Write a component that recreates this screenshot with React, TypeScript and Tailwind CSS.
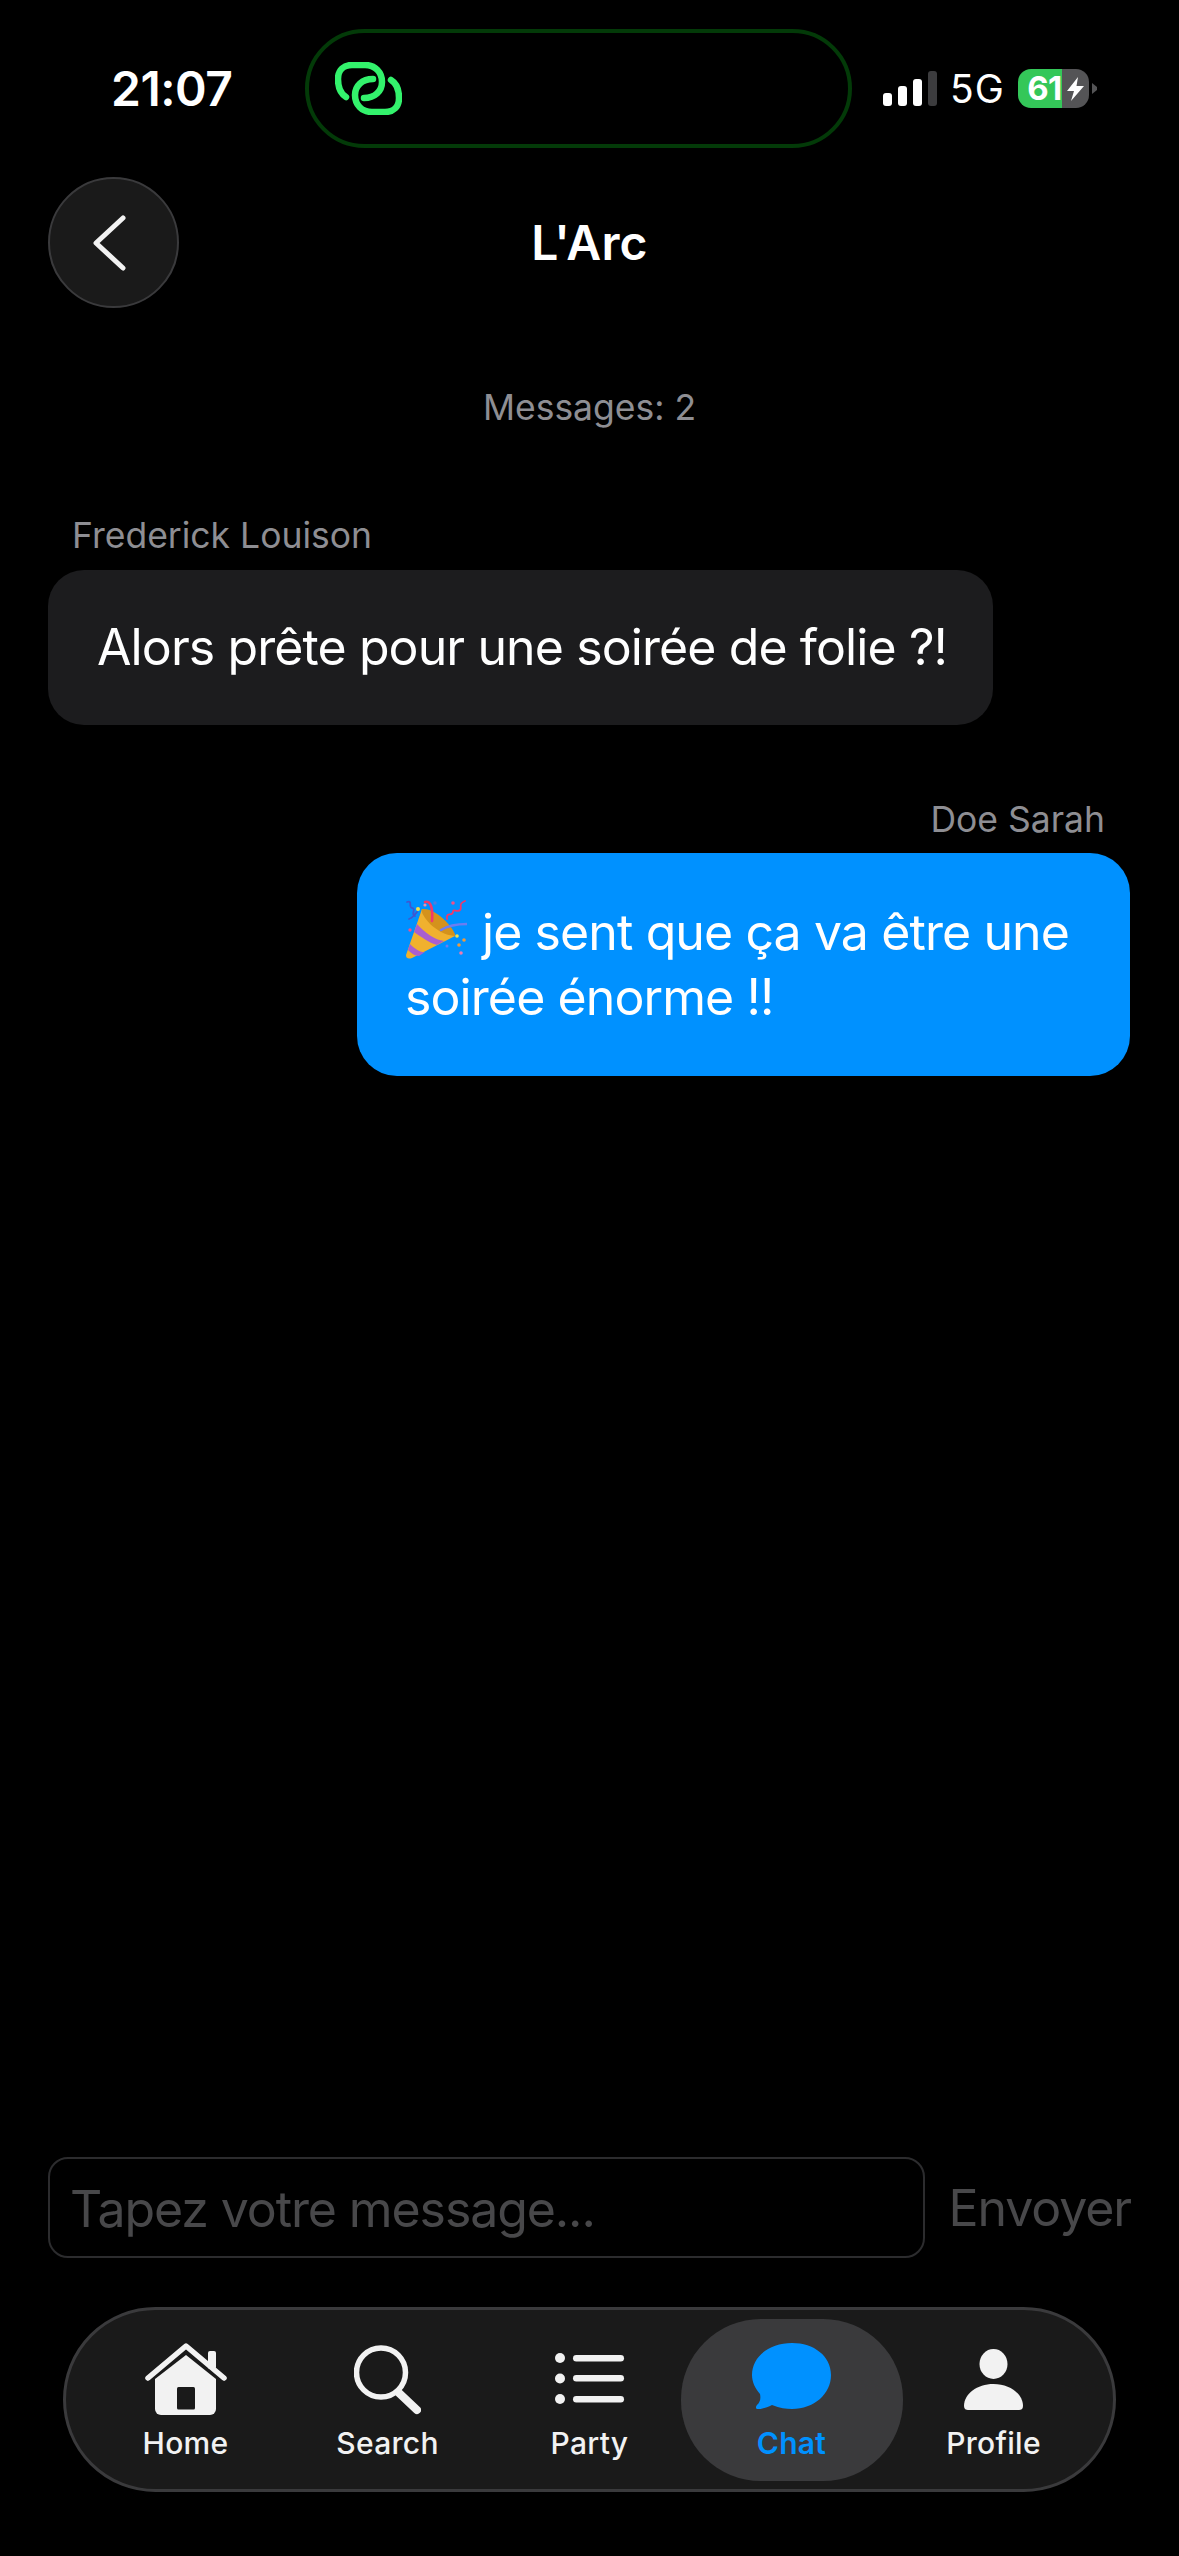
const NAV_LABEL = "mt-[10px] text-[30px] leading-[36px] tracking-[0.3px]";

function LinkLogo() {
  return (
    <svg width="67" height="53" viewBox="0 0 67 53" fill="none" stroke="#33f26c" strokeWidth="6.5" strokeLinecap="round">
      <path d="M11 35 C6 32 3 26 3 17 C3 8 9 3 17 3 H30 C40 3 47 10 47 20 C47 29 40 36 29 36" />
      <path d="M56 18 C61 21 64 27 64 36 C64 45 58 50 50 50 H37 C27 50 20 43 20 33 C20 24 27 17 38 17" />
    </svg>
  );
}

function SignalBars() {
  return (
    <div className="flex h-[35px] w-[54px] items-end justify-between">
      <div className="h-[13px] w-[9px] rounded-[3px] bg-white" />
      <div className="h-[20px] w-[9px] rounded-[3px] bg-white" />
      <div className="h-[27px] w-[9px] rounded-[3px] bg-white" />
      <div className="h-[35px] w-[9px] rounded-[3px] bg-[#3c3c3e]" />
    </div>
  );
}

function Battery() {
  return (
    <div className="flex items-center">
      <div className="flex h-[39px] w-[71px] overflow-hidden rounded-[13px]">
        <div className="flex w-[44px] items-center justify-end bg-[#34c759] text-[33px] leading-none font-bold tracking-[-0.5px] text-white">
          61
        </div>
        <div className="flex w-[27px] items-center justify-center bg-[#545456]">
          <svg width="17" height="24" viewBox="0 0 17 24" fill="#fff">
            <path d="M11 0 L0 14 H7 L4 24 L17 9 H9.5 Z" />
          </svg>
        </div>
      </div>
      <svg className="ml-[3px]" width="5" height="11" viewBox="0 0 5 11" fill="#545456">
        <path d="M0 0 L5 4 V7 L0 11 Z" />
      </svg>
    </div>
  );
}

function PartyPopper() {
  return (
    <svg className="mr-[15px] inline-block align-[-10px]" width="62" height="61" viewBox="0 0 62 61" fill="none">
      <path d="M17 10 L1 56 C1 60 4 60 7 59 L50 37 C46 26 30 12 17 10 Z" fill="#f0b12e" />
      <path d="M17 10 C14 14 30 36 50 37 C52 33 32 8 17 10 Z" fill="#d4921c" />
      <path d="M12 25 C20 34 30 41 39 42 L32 46 C24 44 15 37 9 33 Z" fill="#a95fd0" />
      <path d="M5 45 C10 50 16 54 20 53 L14 57 C10 57 6 54 3 51 Z" fill="#a95fd0" />
      <path d="M2 3 C8 1 3 8 7 9 C12 10 5 15 10 17 M4 20 C9 18 9 16 12 13" stroke="#3f57d0" strokeWidth="1.8" strokeLinecap="round" />
      <path d="M20 3 C26 1 28 10 27 22" stroke="#f0386b" strokeWidth="2.6" strokeLinecap="round" />
      <path d="M42 20 C41 12 47 18 48 13 C48 9 52 14 55 11 C58 8 52 5 60 2" stroke="#f0386b" strokeWidth="1.8" strokeLinecap="round" />
      <path d="M36 31 C44 26 52 25 62 25" stroke="#6d7df0" strokeWidth="2.4" strokeLinecap="round" />
      <circle cx="13" cy="10" r="2" fill="#f5e04a" />
      <circle cx="20" cy="6" r="1.6" fill="#f08ab0" />
      <circle cx="30" cy="4" r="1.8" fill="#4a7de0" />
      <circle cx="48" cy="4" r="1.8" fill="#f0508a" />
      <circle cx="5" cy="31" r="1.7" fill="#f0508a" />
      <circle cx="52" cy="37" r="1.8" fill="#f5e04a" />
      <circle cx="59" cy="41" r="1.8" fill="#f09a3a" />
      <circle cx="54" cy="46" r="1.8" fill="#f09a3a" />
      <circle cx="56" cy="54" r="1.8" fill="#f07ab0" />
      <circle cx="42" cy="47" r="1.5" fill="#6d7df0" />
    </svg>
  );
}

function HomeIcon() {
  return (
    <svg width="82" height="72" viewBox="0 0 82 72" fill="none">
      <path d="M10 36 L41 12 L71 36 V66 a6 6 0 0 1 -6 6 H16 a6 6 0 0 1 -6 -6 Z" fill="#f2f2f2" />
      <rect x="32" y="44" width="18" height="22.5" rx="1.5" fill="#1a1a1a" />
      <rect x="63" y="8" width="8" height="18" rx="2" fill="#f2f2f2" />
      <path d="M3 35 L41 3 L79 35" stroke="#f2f2f2" strokeWidth="5.5" strokeLinecap="round" strokeLinejoin="round" />
    </svg>
  );
}

function SearchIcon() {
  return (
    <svg width="67" height="72" viewBox="0 0 67 72" fill="none" stroke="#f2f2f2" strokeLinecap="round">
      <circle cx="27" cy="29.5" r="24.5" strokeWidth="5.5" />
      <path d="M45 50 L63 67" strokeWidth="8" />
    </svg>
  );
}

function PartyIcon() {
  return (
    <svg width="70" height="72" viewBox="0 0 70 72" fill="#f2f2f2">
      <circle cx="5" cy="15" r="5" />
      <circle cx="5" cy="35.5" r="5" />
      <circle cx="5" cy="56" r="5" />
      <rect x="18" y="12" width="51" height="6.5" rx="3.25" />
      <rect x="18" y="32" width="51" height="6.5" rx="3.25" />
      <rect x="18" y="53" width="51" height="6.5" rx="3.25" />
    </svg>
  );
}

function ChatIcon() {
  return (
    <svg width="79" height="72" viewBox="0 0 79 72" fill="#0091ff">
      <path d="M40 0 C62 0 79 13 79 32 C79 51 62 66 40 66 C34 66 28 65 20 62 C15 65 9 66 6 66 C3 66 4 63 5 62 C8 59 9 56 8 51 C3 45 0 39 0 32 C0 13 18 0 40 0 Z" />
    </svg>
  );
}

function ProfileIcon() {
  return (
    <svg width="59" height="72" viewBox="0 0 59 72" fill="#f2f2f2">
      <ellipse cx="29.5" cy="21" rx="14" ry="15" />
      <path d="M29.5 41 C46 41 59 51 59 63 C59 66 57 67 55 67 H4 C2 67 0 66 0 63 C0 51 13 41 29.5 41 Z" />
    </svg>
  );
}

function NavItem({ label, children, active }: { label: string; children: React.ReactNode; active?: boolean }) {
  return (
    <div
      className={
        active
          ? "-mx-[10px] flex h-[162px] w-[222px] flex-col items-center rounded-[80px] bg-[#3a3a3c] pt-[24px] font-semibold text-[#0091ff]"
          : "flex h-[162px] w-[202px] flex-col items-center pt-[24px] font-medium text-[#f2f2f2]"
      }
    >
      {children}
      <span className={NAV_LABEL}>{label}</span>
    </div>
  );
}

export default function App() {
  return (
    <div className="flex min-h-[2556px] w-[1179px] flex-col overflow-hidden bg-black font-['Inter','Noto_Sans',sans-serif] text-white">
      <div className="flex items-center pt-[29px] pl-[111px]">
        <span className="w-[120px] text-[48px] leading-[50px] font-semibold tracking-[-0.5px]">21:07</span>
        <div className="ml-[74px] flex h-[119px] w-[547px] items-center rounded-[60px] border-[4px] border-[#033a08] pl-[26px]">
          <LinkLogo />
        </div>
        <div className="ml-[31px]">
          <SignalBars />
        </div>
        <span className="ml-[13px] text-[39px] leading-[40px] tracking-[1px]">5G</span>
        <div className="ml-[13px]">
          <Battery />
        </div>
      </div>

      <div className="mt-[29px] grid grid-cols-[131px_1fr_131px] items-center px-[48px]">
        <button className="flex h-[131px] w-[131px] items-center justify-center rounded-full border-[2px] border-[#3a3a3c] bg-[#1a1a1a]">
          <svg className="mr-[8px]" width="33" height="56" viewBox="0 0 33 56" fill="none" stroke="#f2f2f2" strokeWidth="5" strokeLinecap="round" strokeLinejoin="round">
            <path d="M30 3 L3 28 L30 53" />
          </svg>
        </button>
        <h1 className="text-center text-[48px] leading-[56px] font-semibold tracking-[0.2px]">L'Arc</h1>
        <div />
      </div>

      <p className="mt-[80px] text-center text-[35.5px] leading-[40px] text-[#8e8e93]">Messages: 2</p>

      <div className="mt-[88px] flex flex-col px-[48px]">
        <span className="pl-[24px] text-[35.5px] leading-[40px] text-[#8e8e93]">Frederick Louison</span>
        <div className="mt-[14px] w-[945px] rounded-[36px] bg-[#1c1c1e] py-[45px] pr-[30px] pl-[49px] text-[50px] leading-[65px] tracking-[-0.9px]">
          Alors prête pour une soirée de folie ?!
        </div>
      </div>

      <div className="mt-[75px] flex flex-col items-end px-[49px]">
        <span className="pr-[25px] text-[35.5px] leading-[40px] text-[#8e8e93]">Doe Sarah</span>
        <div className="mt-[13px] w-[773px] rounded-[40px] bg-[#0091ff] py-[46px] pr-[49px] pl-[48px] text-[50px] leading-[65px] tracking-[-0.9px]">
          <PartyPopper />
          je sent que ça va être une soirée énorme !!
        </div>
      </div>

      <div className="mt-auto flex items-center px-[48px]">
        <input
          readOnly
          placeholder="Tapez votre message..."
          className="h-[101px] w-[877px] rounded-[20px] border-[2px] border-[#2c2c2e] bg-black px-[20px] pt-[2px] text-[50px] tracking-[-1.1px] text-white outline-none placeholder:text-[#48484a]"
        />
        <button className="ml-auto text-[50px] leading-[60px] tracking-[-1.1px] text-[#48484a]">Envoyer</button>
      </div>

      <nav className="mx-auto mt-[49px] mb-[64px] flex h-[185px] w-[1053px] items-start justify-center rounded-[93px] border-[3px] border-[#3a3a3c] bg-[#1a1a1a] pt-[9px]">
        <NavItem label="Home">
          <HomeIcon />
        </NavItem>
        <NavItem label="Search">
          <SearchIcon />
        </NavItem>
        <NavItem label="Party">
          <PartyIcon />
        </NavItem>
        <NavItem label="Chat" active>
          <ChatIcon />
        </NavItem>
        <NavItem label="Profile">
          <ProfileIcon />
        </NavItem>
      </nav>
    </div>
  );
}
